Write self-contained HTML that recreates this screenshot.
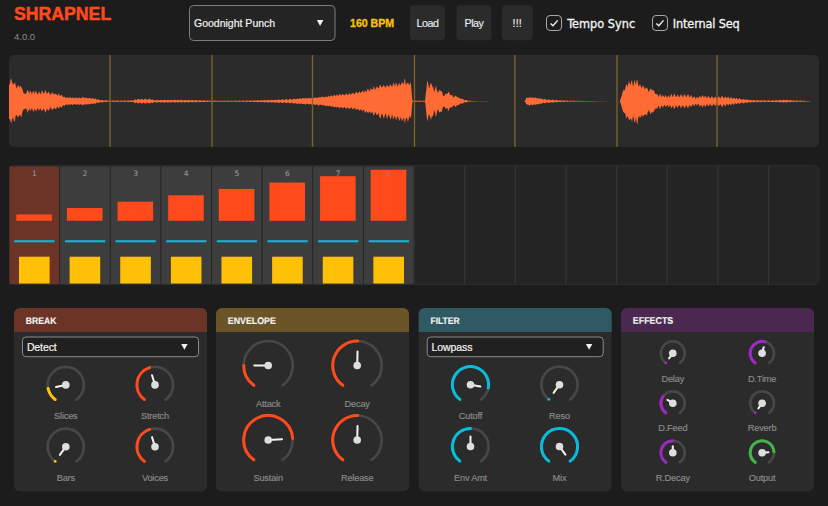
<!DOCTYPE html>
<html><head><meta charset="utf-8"><title>Shrapnel</title>
<style>
html,body{margin:0;padding:0;background:#1c1c1c;}
body{width:828px;height:506px;overflow:hidden;position:relative;font-family:"Liberation Sans",sans-serif;}
svg{position:absolute;left:0;top:0;display:block}
text{font-family:"Liberation Sans",sans-serif;}
.kl{font-size:9.2px;fill:#8c8c8c;stroke:#8c8c8c;stroke-width:0.15px;text-anchor:middle;letter-spacing:-0.17px}
.sn{font-family:"DejaVu Sans","Liberation Sans",sans-serif;font-size:7.5px;fill:#969696;stroke:#969696;stroke-width:0.1px;text-anchor:middle}
.pt{font-size:9.5px;font-weight:bold;fill:#f4f4f4;stroke:#f4f4f4;stroke-width:0.15px}
.st{fill:#f2f2f2;stroke:#f2f2f2;stroke-width:0.2px}
.bt{font-size:10.7px;fill:#ededed;stroke:#ededed;stroke-width:0.15px;text-anchor:middle;letter-spacing:-0.45px}
.cb{font-family:"DejaVu Sans","Liberation Sans",sans-serif;font-stretch:condensed;font-size:12.6px;fill:#f4f4f4;stroke:#f4f4f4;stroke-width:0.3px}
</style></head><body>
<svg width="828" height="506" viewBox="0 0 828 506">
<rect width="828" height="506" fill="#1c1c1c"/>
<!-- header -->
<text x="13.9" y="20" font-size="17.7" font-weight="bold" fill="#ff4a1c" stroke="#ff4a1c" stroke-width="0.45">SHRAPNEL</text>
<text x="14" y="40.2" font-size="9.5" fill="#8a8a8a">4.0.0</text>
<rect x="189.5" y="5.5" width="145.5" height="35" rx="4" fill="#242424" stroke="#7d7d7d"/>
<text x="194" y="26.6" class="st" font-size="10.5">Goodnight Punch</text>
<path d="M316.8 20 h6.6 l-3.3 6z" fill="#f0f0f0"/>
<text x="350" y="26.7" font-size="10.6" font-weight="bold" fill="#ffc107" stroke="#ffc107" stroke-width="0.3">160 BPM</text>
<rect x="410" y="5.3" width="35" height="35" rx="4" fill="#2b2b2b"/><text x="427.5" y="26.6" class="bt">Load</text>
<rect x="456.5" y="5.3" width="35" height="35" rx="4" fill="#2b2b2b"/><text x="474" y="26.6" class="bt">Play</text>
<rect x="502" y="5.3" width="30.7" height="35" rx="4" fill="#2b2b2b"/><text x="517.3" y="26.6" class="bt" style="letter-spacing:0.2px">!!!</text>
<rect x="546.5" y="15.5" width="15" height="15" rx="3.5" fill="#1c1c1c" stroke="#a8a8a8"/>
<path d="M550.6 23.5 l2.4 2.3 l4.7 -5.4" fill="none" stroke="#f4f4f4" stroke-width="1.4"/>
<text x="567.3" y="28" class="cb">Tempo Sync</text>
<rect x="652.5" y="15.5" width="15" height="15" rx="3.5" fill="#1c1c1c" stroke="#a8a8a8"/>
<path d="M656.4 23.5 l2.4 2.3 l4.7 -5.4" fill="none" stroke="#f4f4f4" stroke-width="1.4"/>
<text x="672.8" y="28" class="cb" style="letter-spacing:-0.15px">Internal Seq</text>
<!-- waveform -->
<rect x="9" y="55" width="810" height="92" rx="5" fill="#2b2b2b"/>
<path d="M9.00 83.59 L9.50 85.18 L10.00 83.61 L10.50 80.04 L11.00 78.64 L11.50 79.24 L12.00 82.08 L12.50 83.16 L13.00 84.90 L13.50 83.67 L14.00 83.86 L14.50 83.18 L15.00 82.03 L15.50 84.93 L16.00 86.58 L16.50 88.28 L17.00 87.69 L17.50 85.57 L18.00 86.01 L18.50 85.08 L19.00 86.36 L19.50 87.93 L20.00 86.01 L20.50 86.29 L21.00 86.40 L21.50 87.65 L22.00 87.80 L22.50 89.72 L23.00 91.37 L23.50 93.12 L24.00 93.51 L24.50 93.82 L25.00 93.37 L25.50 94.08 L26.00 93.98 L26.50 92.62 L27.00 91.12 L27.50 90.41 L28.00 90.07 L28.50 91.55 L29.00 93.29 L29.50 92.98 L30.00 91.68 L30.50 90.97 L31.00 91.17 L31.50 93.42 L32.00 94.40 L32.50 92.50 L33.00 90.87 L33.50 91.67 L34.00 91.60 L34.50 93.15 L35.00 93.54 L35.50 91.22 L36.00 90.60 L36.50 92.33 L37.00 93.22 L37.50 94.39 L38.00 94.07 L38.50 92.71 L39.00 91.33 L39.50 91.91 L40.00 93.50 L40.50 94.15 L41.00 93.32 L41.50 91.29 L42.00 90.54 L42.50 91.09 L43.00 93.27 L43.50 93.56 L44.00 93.10 L44.50 92.38 L45.00 90.41 L45.50 89.69 L46.00 91.24 L46.50 93.61 L47.00 93.22 L47.50 93.25 L48.00 92.18 L48.50 91.53 L49.00 92.56 L49.50 92.90 L50.00 94.18 L50.50 94.92 L51.00 94.01 L51.50 93.48 L52.00 92.72 L52.50 92.74 L53.00 92.82 L53.50 94.29 L54.00 94.47 L54.50 94.07 L55.00 93.99 L55.50 93.47 L56.00 93.97 L56.50 94.21 L57.00 95.24 L57.50 95.62 L58.00 95.00 L58.50 93.90 L59.00 93.27 L59.50 95.30 L60.00 96.11 L60.50 95.71 L61.00 94.95 L61.50 95.13 L62.00 94.81 L62.50 96.34 L63.00 96.90 L63.50 97.55 L64.00 96.49 L64.50 96.88 L65.00 96.83 L65.50 97.63 L66.00 98.18 L66.50 97.76 L67.00 97.31 L67.50 97.53 L68.00 97.51 L68.50 97.90 L69.00 97.91 L69.50 97.47 L70.00 97.30 L70.50 97.58 L71.00 97.89 L71.50 98.20 L72.00 98.08 L72.50 97.67 L73.00 97.25 L73.50 97.53 L74.00 98.23 L74.50 98.23 L75.00 98.21 L75.50 97.61 L76.00 97.42 L76.50 97.84 L77.00 98.00 L77.50 98.45 L78.00 98.24 L78.50 97.88 L79.00 97.50 L79.50 97.41 L80.00 97.73 L80.50 98.20 L81.00 98.14 L81.50 98.22 L82.00 97.48 L82.50 97.11 L83.00 97.01 L83.50 97.66 L84.00 97.59 L84.50 98.15 L85.00 98.27 L85.50 97.65 L86.00 97.50 L86.50 97.90 L87.00 97.63 L87.50 98.21 L88.00 98.29 L88.50 98.51 L89.00 98.19 L89.50 97.74 L90.00 98.13 L90.50 98.17 L91.00 98.81 L91.50 98.59 L92.00 98.38 L92.50 98.22 L93.00 98.29 L93.50 98.75 L94.00 98.77 L94.50 99.02 L95.00 98.66 L95.50 98.70 L96.00 98.47 L96.50 99.79 L97.00 99.80 L97.50 99.40 L98.00 99.34 L98.50 99.42 L99.00 99.58 L99.50 99.95 L100.00 100.27 L100.50 100.46 L101.00 100.26 L101.50 100.17 L102.00 100.06 L102.50 100.09 L103.00 100.22 L103.50 100.51 L104.00 100.70 L104.50 100.62 L105.00 100.47 L105.50 100.34 L106.00 100.31 L106.50 100.42 L107.00 100.51 L107.50 100.72 L108.00 100.79 L108.50 100.60 L109.00 100.48 L109.50 100.45 L110.00 100.45 L110.50 100.59 L111.00 100.64 L111.50 100.80 L112.00 100.76 L112.50 100.62 L113.00 100.59 L113.50 100.46 L114.00 100.48 L114.50 100.53 L115.00 100.71 L115.50 100.85 L116.00 100.69 L116.50 100.55 L117.00 100.46 L117.50 100.47 L118.00 100.55 L118.50 100.67 L119.00 100.81 L119.50 100.78 L120.00 100.68 L120.50 100.56 L121.00 100.44 L121.50 100.56 L122.00 100.64 L122.50 100.73 L123.00 100.82 L123.50 100.69 L124.00 100.55 L124.50 100.51 L125.00 100.48 L125.50 100.56 L126.00 100.72 L126.50 100.80 L127.00 100.63 L127.50 100.47 L128.00 100.45 L128.50 100.44 L129.00 100.57 L129.50 100.74 L130.00 100.68 L130.50 100.54 L131.00 100.41 L131.50 100.32 L132.00 100.37 L132.50 100.55 L133.00 100.74 L133.50 100.43 L134.00 100.09 L134.50 99.68 L135.00 99.29 L135.50 99.44 L136.00 99.66 L136.50 100.16 L137.00 99.64 L137.50 99.33 L138.00 99.12 L138.50 98.76 L139.00 99.28 L139.50 99.60 L140.00 100.07 L140.50 99.49 L141.00 99.00 L141.50 99.04 L142.00 98.98 L142.50 99.22 L143.00 99.44 L143.50 100.05 L144.00 99.46 L144.50 99.10 L145.00 98.69 L145.50 98.71 L146.00 98.79 L146.50 99.46 L147.00 99.96 L147.50 99.92 L148.00 99.31 L148.50 99.20 L149.00 98.83 L149.50 98.87 L150.00 99.10 L150.50 99.60 L151.00 100.11 L151.50 99.70 L152.00 99.26 L152.50 99.40 L153.00 99.51 L153.50 99.91 L154.00 100.25 L154.50 100.47 L155.00 100.59 L155.50 100.26 L156.00 100.16 L156.50 99.95 L157.00 99.89 L157.50 100.12 L158.00 100.26 L158.50 100.50 L159.00 100.38 L159.50 100.10 L160.00 99.95 L160.50 99.95 L161.00 99.89 L161.50 100.00 L162.00 100.29 L162.50 100.50 L163.00 100.23 L163.50 100.01 L164.00 99.79 L164.50 99.77 L165.00 99.84 L165.50 100.27 L166.00 100.52 L166.50 100.32 L167.00 99.94 L167.50 99.80 L168.00 99.91 L168.50 100.01 L169.00 100.12 L169.50 100.57 L170.00 100.29 L170.50 99.98 L171.00 99.91 L171.50 99.94 L172.00 99.90 L172.50 100.25 L173.00 100.61 L173.50 100.26 L174.00 99.97 L174.50 99.75 L175.00 99.82 L175.50 100.08 L176.00 100.29 L176.50 100.52 L177.00 100.12 L177.50 99.96 L178.00 99.84 L178.50 99.95 L179.00 100.09 L179.50 100.48 L180.00 100.49 L180.50 100.11 L181.00 100.05 L181.50 99.86 L182.00 99.98 L182.50 100.18 L183.00 100.51 L183.50 100.40 L184.00 100.14 L184.50 100.03 L185.00 100.01 L185.50 100.03 L186.00 100.30 L186.50 100.53 L187.00 100.46 L187.50 100.20 L188.00 100.06 L188.50 99.94 L189.00 100.08 L189.50 100.15 L190.00 100.41 L190.50 100.57 L191.00 100.29 L191.50 100.23 L192.00 100.10 L192.50 100.14 L193.00 100.11 L193.50 100.39 L194.00 100.62 L194.50 100.51 L195.00 100.26 L195.50 100.13 L196.00 100.19 L196.50 100.24 L197.00 100.28 L197.50 100.53 L198.00 100.70 L198.50 100.51 L199.00 100.31 L199.50 100.31 L200.00 100.22 L200.50 100.34 L201.00 100.39 L201.50 100.68 L202.00 100.74 L202.50 100.53 L203.00 100.47 L203.50 100.32 L204.00 100.34 L204.50 100.40 L205.00 100.65 L205.50 100.83 L206.00 100.68 L206.50 100.61 L207.00 100.46 L207.50 100.45 L208.00 100.56 L208.50 100.67 L209.00 100.82 L209.50 100.82 L210.00 100.66 L210.50 100.61 L211.00 100.53 L211.50 100.58 L212.00 100.67 L212.50 100.83 L213.00 100.88 L213.50 100.71 L214.00 100.59 L214.50 100.62 L215.00 100.60 L215.50 100.73 L216.00 100.87 L216.50 100.86 L217.00 100.74 L217.50 100.63 L218.00 100.63 L218.50 100.63 L219.00 100.73 L219.50 100.90 L220.00 100.81 L220.50 100.70 L221.00 100.65 L221.50 100.66 L222.00 100.67 L222.50 100.81 L223.00 100.91 L223.50 100.77 L224.00 100.72 L224.50 100.66 L225.00 100.66 L225.50 100.68 L226.00 100.84 L226.50 100.92 L227.00 100.76 L227.50 100.65 L228.00 100.61 L228.50 100.65 L229.00 100.67 L229.50 100.83 L230.00 100.92 L230.50 100.82 L231.00 100.66 L231.50 100.63 L232.00 100.65 L232.50 100.67 L233.00 100.79 L233.50 100.92 L234.00 100.83 L234.50 100.72 L235.00 100.69 L235.50 100.62 L236.00 100.68 L236.50 100.70 L237.00 100.85 L237.50 100.88 L238.00 100.76 L238.50 100.62 L239.00 100.62 L239.50 100.56 L240.00 100.64 L240.50 100.72 L241.00 100.88 L241.50 100.80 L242.00 100.72 L242.50 100.57 L243.00 100.61 L243.50 100.57 L244.00 100.68 L244.50 100.79 L245.00 100.91 L245.50 100.77 L246.00 100.62 L246.50 100.58 L247.00 100.49 L247.50 100.56 L248.00 100.62 L248.50 100.81 L249.00 100.78 L249.50 100.68 L250.00 100.58 L250.50 100.49 L251.00 100.49 L251.50 100.54 L252.00 100.67 L252.50 100.82 L253.00 100.58 L253.50 100.46 L254.00 100.40 L254.50 100.34 L255.00 100.42 L255.50 100.54 L256.00 100.75 L256.50 100.56 L257.00 100.38 L257.50 100.28 L258.00 100.23 L258.50 100.32 L259.00 100.56 L259.50 100.74 L260.00 100.48 L260.50 100.19 L261.00 100.12 L261.50 100.20 L262.00 100.30 L262.50 100.43 L263.00 100.62 L263.50 100.37 L264.00 100.16 L264.50 100.00 L265.00 99.99 L265.50 100.21 L266.00 100.43 L266.50 100.43 L267.00 100.20 L267.50 99.90 L268.00 99.81 L268.50 100.00 L269.00 100.24 L269.50 100.48 L270.00 100.30 L270.50 100.07 L271.00 99.91 L271.50 99.90 L272.00 99.85 L272.50 100.10 L273.00 100.46 L273.50 100.33 L274.00 99.99 L274.50 99.77 L275.00 99.63 L275.50 99.64 L276.00 99.99 L276.50 100.29 L277.00 100.23 L277.50 99.97 L278.00 99.54 L278.50 99.43 L279.00 99.49 L279.50 99.76 L280.00 100.07 L280.50 100.34 L281.00 99.94 L281.50 99.55 L282.00 99.54 L282.50 99.34 L283.00 99.34 L283.50 99.74 L284.00 100.12 L284.50 100.23 L285.00 99.69 L285.50 99.28 L286.00 99.19 L286.50 99.06 L287.00 99.22 L287.50 99.79 L288.00 100.05 L288.50 99.89 L289.00 99.53 L289.50 99.05 L290.00 98.80 L290.50 99.11 L291.00 99.11 L291.50 99.74 L292.00 100.12 L292.50 99.46 L293.00 98.99 L293.50 98.73 L294.00 98.81 L294.50 98.99 L295.00 99.32 L295.50 99.25 L296.00 98.99 L296.50 99.00 L297.00 98.71 L297.50 98.45 L298.00 98.91 L298.50 99.03 L299.00 98.91 L299.50 98.25 L300.00 98.29 L300.50 98.51 L301.00 98.70 L301.50 98.82 L302.00 98.39 L302.50 98.17 L303.00 98.02 L303.50 98.27 L304.00 98.52 L304.50 98.38 L305.00 98.12 L305.50 97.75 L306.00 98.21 L306.50 98.51 L307.00 98.40 L307.50 98.36 L308.00 98.27 L308.50 97.64 L309.00 98.20 L309.50 98.05 L310.00 98.29 L310.50 98.58 L311.00 98.18 L311.50 97.89 L312.00 97.51 L312.50 98.05 L313.00 98.07 L313.50 98.08 L314.00 98.02 L314.50 97.71 L315.00 97.80 L315.50 97.64 L316.00 97.32 L316.50 97.84 L317.00 97.93 L317.50 97.88 L318.00 97.73 L318.50 97.38 L319.00 96.73 L319.50 97.45 L320.00 97.32 L320.50 97.73 L321.00 97.35 L321.50 97.00 L322.00 96.57 L322.50 96.58 L323.00 97.22 L323.50 97.18 L324.00 97.17 L324.50 97.18 L325.00 96.65 L325.50 96.28 L326.00 96.97 L326.50 97.35 L327.00 96.90 L327.50 97.00 L328.00 95.97 L328.50 95.68 L329.00 96.32 L329.50 96.94 L330.00 96.54 L330.50 95.77 L331.00 95.68 L331.50 95.27 L332.00 96.38 L332.50 96.15 L333.00 96.44 L333.50 95.04 L334.00 95.25 L334.50 95.08 L335.00 95.76 L335.50 96.02 L336.00 95.18 L336.50 95.29 L337.00 94.26 L337.50 94.87 L338.00 96.22 L338.50 95.74 L339.00 94.42 L339.50 93.77 L340.00 94.22 L340.50 94.88 L341.00 95.66 L341.50 95.40 L342.00 94.17 L342.50 93.85 L343.00 94.55 L343.50 94.63 L344.00 95.03 L344.50 95.44 L345.00 95.00 L345.50 94.44 L346.00 93.79 L346.50 93.59 L347.00 94.01 L347.50 95.26 L348.00 95.04 L348.50 94.23 L349.00 93.79 L349.50 93.53 L350.00 93.12 L350.50 94.48 L351.00 94.58 L351.50 94.07 L352.00 93.52 L352.50 93.81 L353.00 92.17 L353.50 93.02 L354.00 93.65 L354.50 94.58 L355.00 93.87 L355.50 92.82 L356.00 92.21 L356.50 91.60 L357.00 92.48 L357.50 93.18 L358.00 93.15 L358.50 92.90 L359.00 91.72 L359.50 91.01 L360.00 92.70 L360.50 92.41 L361.00 92.91 L361.50 91.74 L362.00 91.69 L362.50 90.65 L363.00 90.99 L363.50 92.14 L364.00 92.85 L364.50 91.11 L365.00 90.18 L365.50 90.88 L366.00 91.92 L366.50 91.70 L367.00 91.07 L367.50 88.93 L368.00 88.65 L368.50 89.41 L369.00 90.79 L369.50 91.31 L370.00 90.73 L370.50 87.56 L371.00 89.28 L371.50 88.65 L372.00 90.59 L372.50 89.22 L373.00 88.99 L373.50 86.49 L374.00 86.75 L374.50 88.13 L375.00 90.39 L375.50 88.67 L376.00 88.24 L376.50 87.00 L377.00 86.95 L377.50 86.25 L378.00 88.26 L378.50 88.53 L379.00 88.02 L379.50 85.68 L380.00 85.11 L380.50 84.97 L381.00 86.07 L381.50 87.53 L382.00 86.94 L382.50 87.10 L383.00 86.20 L383.50 84.29 L384.00 86.16 L384.50 86.24 L385.00 86.23 L385.50 88.22 L386.00 86.61 L386.50 85.55 L387.00 85.69 L387.50 85.25 L388.00 85.46 L388.50 86.86 L389.00 87.44 L389.50 85.43 L390.00 84.19 L390.50 84.71 L391.00 85.47 L391.50 86.05 L392.00 86.84 L392.50 86.30 L393.00 83.44 L393.50 82.26 L394.00 84.15 L394.50 84.43 L395.00 87.43 L395.50 84.03 L396.00 81.79 L396.50 83.94 L397.00 84.29 L397.50 86.83 L398.00 86.06 L398.50 84.51 L399.00 82.74 L399.50 82.94 L400.00 85.12 L400.50 84.66 L401.00 85.30 L401.50 82.67 L402.00 82.22 L402.50 82.36 L403.00 83.51 L403.50 83.93 L404.00 83.10 L404.50 78.96 L405.00 78.50 L405.50 83.23 L406.00 85.63 L406.50 83.41 L407.00 83.50 L407.50 83.56 L408.00 81.67 L408.50 84.03 L409.00 84.47 L409.50 84.69 L410.00 83.67 L410.50 81.85 L411.00 84.84 L411.50 90.23 L412.00 97.17 L412.50 100.60 L413.00 100.75 L413.50 100.87 L414.00 100.87 L414.50 100.74 L415.00 100.64 L415.50 100.64 L416.00 100.59 L416.50 100.72 L417.00 100.79 L417.50 100.91 L418.00 100.84 L418.50 100.73 L419.00 100.67 L419.50 100.62 L420.00 100.67 L420.50 100.76 L421.00 100.85 L421.50 100.96 L422.00 100.83 L422.50 100.71 L423.00 100.71 L423.50 100.67 L424.00 100.77 L424.50 100.82 L425.00 100.88 L425.50 96.90 L426.00 91.79 L426.50 89.09 L427.00 82.28 L427.50 80.48 L428.00 83.76 L428.50 84.53 L429.00 88.35 L429.50 87.76 L430.00 85.81 L430.50 83.43 L431.00 82.52 L431.50 84.15 L432.00 85.13 L432.50 87.22 L433.00 86.69 L433.50 88.48 L434.00 91.23 L434.50 91.86 L435.00 88.91 L435.50 87.64 L436.00 85.01 L436.50 88.52 L437.00 90.55 L437.50 92.06 L438.00 92.95 L438.50 91.34 L439.00 90.24 L439.50 89.78 L440.00 91.74 L440.50 89.92 L441.00 91.33 L441.50 91.11 L442.00 91.98 L442.50 93.22 L443.00 95.48 L443.50 95.95 L444.00 96.42 L444.50 95.67 L445.00 94.67 L445.50 93.58 L446.00 93.67 L446.50 93.90 L447.00 94.27 L447.50 93.33 L448.00 92.95 L448.50 91.74 L449.00 91.75 L449.50 93.18 L450.00 94.76 L450.50 95.36 L451.00 95.17 L451.50 95.55 L452.00 94.75 L452.50 95.32 L453.00 96.74 L453.50 97.38 L454.00 97.26 L454.50 96.66 L455.00 95.49 L455.50 95.70 L456.00 95.67 L456.50 96.54 L457.00 96.95 L457.50 97.33 L458.00 97.52 L458.50 97.27 L459.00 97.82 L459.50 98.34 L460.00 98.46 L460.50 98.63 L461.00 98.80 L461.50 98.43 L462.00 98.73 L462.50 99.00 L463.00 99.06 L463.50 99.54 L464.00 99.94 L464.50 100.34 L465.00 100.24 L465.50 99.96 L466.00 99.94 L466.50 100.01 L467.00 100.31 L467.50 100.47 L468.00 100.75 L468.50 100.89 L469.00 100.81 L469.50 100.79 L470.00 100.77 L470.50 100.78 L471.00 100.86 L471.50 100.97 L472.00 101.03 L472.50 101.02 L473.00 100.98 L473.50 100.99 L474.00 101.00 L474.50 101.03 L475.00 101.09 L475.50 101.12 L476.00 101.11 L476.50 101.08 L477.00 101.05 L477.50 101.07 L478.00 101.07 L478.50 101.10 L479.00 101.13 L479.50 101.12 L480.00 101.10 L480.50 101.07 L481.00 101.08 L481.50 101.10 L482.00 101.12 L482.50 101.15 L483.00 101.12 L483.50 101.11 L484.00 101.10 L484.50 101.09 L485.00 101.11 L485.50 101.14 L486.00 101.15 L486.50 101.13 L487.00 101.11 L487.50 101.12 L488.00 101.11 L488.50 101.13 L489.00 101.15 L489.50 101.16 L490.00 101.14 L490.50 101.13 L491.00 101.13 L491.50 101.13 L492.00 101.15 L492.50 101.16 L493.00 101.17 L493.50 101.15 L494.00 101.15 L494.50 101.15 L495.00 101.15 L495.50 101.16 L496.00 101.17 L496.50 101.18 L497.00 101.17 L497.50 101.17 L498.00 101.16 L498.50 101.17 L499.00 101.17 L499.50 101.18 L500.00 101.19 L500.50 101.18 L501.00 101.18 L501.50 101.18 L502.00 101.18 L502.50 101.19 L503.00 101.19 L503.50 101.19 L504.00 101.20 L504.50 101.20 L505.00 101.20 L505.50 101.20 L506.00 101.20 L506.50 101.20 L507.00 101.20 L507.50 101.20 L508.00 101.20 L508.50 101.20 L509.00 101.20 L509.50 101.20 L510.00 101.20 L510.50 101.20 L511.00 101.20 L511.50 101.20 L512.00 101.20 L512.50 101.20 L513.00 101.20 L513.50 101.20 L514.00 101.20 L514.50 101.20 L515.00 101.20 L515.50 101.20 L516.00 101.20 L516.50 101.20 L517.00 101.20 L517.50 101.20 L518.00 101.20 L518.50 101.20 L519.00 101.20 L519.50 101.20 L520.00 101.20 L520.50 101.20 L521.00 101.20 L521.50 101.20 L522.00 101.20 L522.50 101.20 L523.00 101.20 L523.50 101.20 L524.00 101.20 L524.50 100.96 L525.00 100.77 L525.50 100.26 L526.00 98.40 L526.50 97.87 L527.00 97.67 L527.50 97.82 L528.00 97.86 L528.50 97.89 L529.00 97.55 L529.50 97.32 L530.00 97.36 L530.50 97.69 L531.00 97.83 L531.50 97.71 L532.00 97.44 L532.50 97.17 L533.00 97.40 L533.50 98.05 L534.00 98.01 L534.50 97.74 L535.00 97.72 L535.50 97.60 L536.00 97.85 L536.50 98.21 L537.00 98.40 L537.50 98.33 L538.00 98.13 L538.50 98.38 L539.00 98.46 L539.50 98.57 L540.00 98.72 L540.50 98.70 L541.00 98.40 L541.50 98.56 L542.00 98.96 L542.50 99.08 L543.00 99.74 L543.50 99.82 L544.00 99.22 L544.50 99.04 L545.00 99.03 L545.50 99.29 L546.00 99.43 L546.50 99.95 L547.00 100.30 L547.50 99.87 L548.00 99.75 L548.50 99.45 L549.00 99.53 L549.50 99.64 L550.00 99.91 L550.50 100.12 L551.00 100.38 L551.50 100.01 L552.00 99.87 L552.50 99.70 L553.00 99.79 L553.50 99.90 L554.00 100.14 L554.50 100.42 L555.00 100.48 L555.50 100.23 L556.00 100.06 L556.50 99.97 L557.00 100.10 L557.50 100.28 L558.00 100.46 L558.50 100.72 L559.00 100.45 L559.50 100.36 L560.00 100.31 L560.50 100.25 L561.00 100.45 L561.50 100.61 L562.00 100.78 L562.50 100.62 L563.00 100.52 L563.50 100.43 L564.00 100.39 L564.50 100.54 L565.00 100.67 L565.50 100.85 L566.00 100.77 L566.50 100.60 L567.00 100.60 L567.50 100.59 L568.00 100.66 L568.50 100.77 L569.00 100.94 L569.50 100.78 L570.00 100.69 L570.50 100.62 L571.00 100.65 L571.50 100.78 L572.00 100.87 L572.50 100.93 L573.00 100.81 L573.50 100.71 L574.00 100.71 L574.50 100.73 L575.00 100.81 L575.50 100.94 L576.00 100.93 L576.50 100.83 L577.00 100.82 L577.50 100.79 L578.00 100.85 L578.50 100.89 L579.00 100.99 L579.50 100.97 L580.00 100.91 L580.50 100.86 L581.00 100.87 L581.50 100.91 L582.00 100.94 L582.50 101.02 L583.00 101.03 L583.50 100.96 L584.00 100.91 L584.50 100.90 L585.00 100.93 L585.50 100.96 L586.00 101.02 L586.50 101.06 L587.00 101.00 L587.50 100.97 L588.00 100.95 L588.50 100.95 L589.00 100.98 L589.50 101.03 L590.00 101.09 L590.50 101.08 L591.00 101.03 L591.50 101.00 L592.00 101.01 L592.50 101.02 L593.00 101.05 L593.50 101.09 L594.00 101.12 L594.50 101.09 L595.00 101.08 L595.50 101.04 L596.00 101.05 L596.50 101.06 L597.00 101.08 L597.50 101.12 L598.00 101.13 L598.50 101.11 L599.00 101.08 L599.50 101.07 L600.00 101.09 L600.50 101.09 L601.00 101.12 L601.50 101.14 L602.00 101.13 L602.50 101.11 L603.00 101.10 L603.50 101.10 L604.00 101.11 L604.50 101.12 L605.00 101.15 L605.50 101.15 L606.00 101.14 L606.50 101.12 L607.00 101.11 L607.50 101.13 L608.00 101.14 L608.50 101.16 L609.00 101.16 L609.50 101.15 L610.00 101.15 L610.50 101.14 L611.00 101.14 L611.50 101.15 L612.00 101.17 L612.50 101.17 L613.00 101.15 L613.50 101.15 L614.00 101.15 L614.50 101.15 L615.00 101.16 L615.50 101.17 L616.00 101.16 L616.50 101.15 L617.00 101.15 L617.50 101.15 L618.00 101.15 L618.50 101.16 L619.00 101.17 L619.50 101.16 L620.00 100.80 L620.50 99.30 L621.00 97.96 L621.50 96.11 L622.00 94.89 L622.50 91.78 L623.00 91.80 L623.50 89.60 L624.00 90.24 L624.50 90.13 L625.00 89.74 L625.50 86.88 L626.00 85.33 L626.50 84.13 L627.00 84.78 L627.50 87.35 L628.00 84.11 L628.50 83.64 L629.00 79.89 L629.50 83.00 L630.00 83.43 L630.50 85.58 L631.00 82.55 L631.50 80.69 L632.00 80.46 L632.50 83.65 L633.00 86.15 L633.50 85.70 L634.00 82.04 L634.50 79.47 L635.00 81.82 L635.50 84.16 L636.00 83.99 L636.50 81.22 L637.00 79.84 L637.50 80.33 L638.00 83.63 L638.50 86.28 L639.00 86.15 L639.50 85.57 L640.00 83.85 L640.50 85.06 L641.00 87.37 L641.50 87.26 L642.00 88.21 L642.50 86.28 L643.00 85.08 L643.50 86.51 L644.00 86.97 L644.50 88.64 L645.00 89.12 L645.50 88.49 L646.00 86.96 L646.50 88.24 L647.00 87.94 L647.50 88.76 L648.00 90.02 L648.50 92.20 L649.00 91.55 L649.50 90.58 L650.00 89.29 L650.50 88.94 L651.00 88.30 L651.50 90.60 L652.00 89.33 L652.50 90.06 L653.00 90.40 L653.50 90.39 L654.00 90.86 L654.50 91.82 L655.00 93.69 L655.50 94.11 L656.00 94.07 L656.50 94.25 L657.00 93.70 L657.50 94.66 L658.00 95.24 L658.50 96.62 L659.00 96.72 L659.50 95.11 L660.00 94.15 L660.50 94.08 L661.00 95.66 L661.50 96.88 L662.00 96.69 L662.50 95.53 L663.00 94.95 L663.50 95.92 L664.00 96.77 L664.50 97.34 L665.00 96.58 L665.50 94.84 L666.00 95.53 L666.50 96.77 L667.00 97.75 L667.50 97.45 L668.00 95.88 L668.50 95.43 L669.00 95.41 L669.50 97.20 L670.00 97.17 L670.50 96.07 L671.00 94.42 L671.50 93.90 L672.00 94.95 L672.50 96.78 L673.00 96.84 L673.50 95.88 L674.00 93.58 L674.50 93.53 L675.00 95.09 L675.50 96.08 L676.00 97.17 L676.50 96.39 L677.00 95.60 L677.50 95.04 L678.00 94.68 L678.50 95.96 L679.00 97.26 L679.50 97.05 L680.00 96.29 L680.50 94.95 L681.00 93.93 L681.50 94.67 L682.00 95.97 L682.50 96.70 L683.00 97.19 L683.50 95.91 L684.00 94.55 L684.50 94.15 L685.00 95.17 L685.50 95.82 L686.00 97.13 L686.50 96.98 L687.00 95.67 L687.50 94.80 L688.00 94.45 L688.50 94.57 L689.00 96.55 L689.50 97.41 L690.00 97.11 L690.50 95.68 L691.00 95.16 L691.50 95.75 L692.00 96.87 L692.50 98.01 L693.00 97.86 L693.50 97.14 L694.00 96.51 L694.50 96.50 L695.00 97.69 L695.50 98.66 L696.00 98.50 L696.50 97.65 L697.00 96.63 L697.50 97.32 L698.00 98.06 L698.50 98.31 L699.00 97.14 L699.50 96.54 L700.00 95.70 L700.50 96.62 L701.00 97.88 L701.50 97.29 L702.00 95.98 L702.50 94.99 L703.00 95.66 L703.50 96.99 L704.00 97.86 L704.50 96.91 L705.00 95.60 L705.50 95.93 L706.00 96.77 L706.50 97.52 L707.00 98.22 L707.50 97.71 L708.00 96.38 L708.50 95.87 L709.00 96.58 L709.50 97.75 L710.00 98.27 L710.50 98.28 L711.00 97.51 L711.50 96.45 L712.00 96.17 L712.50 96.80 L713.00 98.10 L713.50 98.53 L714.00 98.03 L714.50 97.26 L715.00 96.74 L715.50 96.96 L716.00 97.63 L716.50 98.47 L717.00 98.84 L717.50 98.28 L718.00 97.43 L718.50 96.38 L719.00 96.52 L719.50 97.35 L720.00 98.25 L720.50 98.37 L721.00 97.38 L721.50 96.21 L722.00 95.80 L722.50 96.54 L723.00 96.95 L723.50 98.21 L724.00 97.87 L724.50 97.39 L725.00 96.81 L725.50 96.55 L726.00 97.60 L726.50 98.23 L727.00 98.19 L727.50 97.30 L728.00 96.73 L728.50 96.69 L729.00 97.90 L729.50 98.91 L730.00 98.34 L730.50 97.45 L731.00 96.96 L731.50 97.84 L732.00 98.52 L732.50 98.85 L733.00 98.23 L733.50 97.91 L734.00 97.83 L734.50 98.32 L735.00 99.12 L735.50 98.92 L736.00 98.42 L736.50 97.98 L737.00 98.11 L737.50 98.94 L738.00 99.54 L738.50 99.31 L739.00 98.50 L739.50 98.16 L740.00 98.51 L740.50 99.22 L741.00 99.58 L741.50 99.56 L742.00 99.94 L742.50 99.50 L743.00 99.23 L743.50 98.84 L744.00 99.13 L744.50 99.42 L745.00 99.91 L745.50 100.08 L746.00 99.71 L746.50 99.40 L747.00 99.35 L747.50 99.52 L748.00 99.84 L748.50 100.32 L749.00 100.32 L749.50 100.15 L750.00 99.87 L750.50 99.98 L751.00 99.97 L751.50 100.21 L752.00 100.51 L752.50 100.41 L753.00 100.16 L753.50 100.09 L754.00 100.05 L754.50 100.20 L755.00 100.43 L755.50 100.65 L756.00 100.49 L756.50 100.28 L757.00 100.17 L757.50 100.27 L758.00 100.31 L758.50 100.44 L759.00 100.69 L759.50 100.59 L760.00 100.49 L760.50 100.39 L761.00 100.32 L761.50 100.37 L762.00 100.46 L762.50 100.62 L763.00 100.75 L763.50 100.55 L764.00 100.37 L764.50 100.37 L765.00 100.38 L765.50 100.44 L766.00 100.61 L766.50 100.78 L767.00 100.65 L767.50 100.49 L768.00 100.40 L768.50 100.37 L769.00 100.37 L769.50 100.56 L770.00 100.67 L770.50 100.82 L771.00 100.59 L771.50 100.45 L772.00 100.39 L772.50 100.37 L773.00 100.34 L773.50 100.52 L774.00 100.63 L774.50 100.64 L775.00 100.50 L775.50 100.29 L776.00 100.19 L776.50 100.24 L777.00 100.30 L777.50 100.51 L778.00 100.72 L778.50 100.48 L779.00 100.25 L779.50 100.10 L780.00 100.03 L780.50 100.06 L781.00 100.33 L781.50 100.53 L782.00 100.45 L782.50 100.13 L783.00 99.83 L783.50 99.86 L784.00 99.83 L784.50 100.05 L785.00 100.41 L785.50 100.27 L786.00 100.06 L786.50 99.82 L787.00 99.93 L787.50 100.08 L788.00 100.23 L788.50 100.56 L789.00 100.45 L789.50 100.21 L790.00 100.17 L790.50 100.06 L791.00 100.29 L791.50 100.57 L792.00 100.77 L792.50 100.58 L793.00 100.47 L793.50 100.43 L794.00 100.42 L794.50 100.57 L795.00 100.74 L795.50 100.79 L796.00 100.61 L796.50 100.50 L797.00 100.53 L797.50 100.50 L798.00 100.67 L798.50 100.78 L799.00 100.85 L799.50 100.76 L800.00 100.66 L800.50 100.59 L801.00 100.61 L801.50 100.73 L802.00 100.86 L802.50 100.94 L803.00 100.83 L803.50 100.73 L804.00 100.77 L804.50 100.80 L805.00 100.82 L805.50 100.93 L806.00 101.02 L806.50 100.96 L807.00 100.92 L807.50 100.91 L808.00 100.87 L808.50 100.95 L809.00 101.02 L809.50 101.09 L810.00 101.11 L810.50 101.12 L811.00 101.13 L811.50 101.16 L812.00 101.20 L812.50 101.20 L813.00 101.20 L813.50 101.20 L814.00 101.20 L814.50 101.20 L815.00 101.20 L815.50 101.20 L816.00 101.20 L816.50 101.20 L817.00 101.20 L817.50 101.20 L818.00 101.20 L818.50 101.20 L819.00 101.20 L819.00 101.20 L818.50 101.20 L818.00 101.20 L817.50 101.20 L817.00 101.20 L816.50 101.20 L816.00 101.20 L815.50 101.20 L815.00 101.20 L814.50 101.20 L814.00 101.20 L813.50 101.20 L813.00 101.20 L812.50 101.20 L812.00 101.20 L811.50 101.24 L811.00 101.27 L810.50 101.29 L810.00 101.28 L809.50 101.30 L809.00 101.38 L808.50 101.45 L808.00 101.51 L807.50 101.51 L807.00 101.51 L806.50 101.45 L806.00 101.38 L805.50 101.48 L805.00 101.59 L804.50 101.65 L804.00 101.63 L803.50 101.65 L803.00 101.58 L802.50 101.47 L802.00 101.54 L801.50 101.67 L801.00 101.71 L800.50 101.79 L800.00 101.80 L799.50 101.66 L799.00 101.55 L798.50 101.58 L798.00 101.75 L797.50 101.84 L797.00 101.89 L796.50 101.90 L796.00 101.72 L795.50 101.60 L795.00 101.66 L794.50 101.85 L794.00 102.02 L793.50 101.96 L793.00 101.89 L792.50 101.81 L792.00 101.60 L791.50 101.88 L791.00 102.11 L790.50 102.24 L790.00 102.25 L789.50 102.20 L789.00 102.00 L788.50 101.87 L788.00 102.12 L787.50 102.37 L787.00 102.63 L786.50 102.54 L786.00 102.43 L785.50 102.09 L785.00 102.05 L784.50 102.36 L784.00 102.64 L783.50 102.58 L783.00 102.53 L782.50 102.23 L782.00 102.05 L781.50 101.88 L781.00 102.13 L780.50 102.32 L780.00 102.30 L779.50 102.36 L779.00 102.16 L778.50 101.95 L778.00 101.70 L777.50 101.96 L777.00 102.05 L776.50 102.20 L776.00 102.11 L775.50 102.16 L775.00 101.93 L774.50 101.74 L774.00 101.76 L773.50 101.96 L773.00 102.00 L772.50 102.15 L772.00 102.00 L771.50 101.93 L771.00 101.75 L770.50 101.61 L770.00 101.73 L769.50 101.88 L769.00 102.04 L768.50 102.03 L768.00 101.96 L767.50 101.84 L767.00 101.72 L766.50 101.62 L766.00 101.83 L765.50 101.95 L765.00 102.07 L764.50 102.08 L764.00 101.98 L763.50 101.81 L763.00 101.67 L762.50 101.71 L762.00 101.86 L761.50 102.04 L761.00 102.13 L760.50 102.14 L760.00 101.92 L759.50 101.82 L759.00 101.72 L758.50 101.91 L758.00 102.05 L757.50 102.29 L757.00 102.27 L756.50 102.12 L756.00 101.85 L755.50 101.76 L755.00 101.99 L754.50 102.15 L754.00 102.34 L753.50 102.32 L753.00 102.30 L752.50 101.97 L752.00 101.84 L751.50 102.22 L751.00 102.45 L750.50 102.45 L750.00 102.37 L749.50 102.36 L749.00 102.06 L748.50 102.13 L748.00 102.43 L747.50 102.75 L747.00 102.97 L746.50 102.90 L746.00 102.56 L745.50 102.16 L745.00 102.56 L744.50 103.06 L744.00 103.50 L743.50 103.36 L743.00 103.50 L742.50 102.86 L742.00 102.34 L741.50 103.01 L741.00 102.81 L740.50 102.99 L740.00 103.51 L739.50 103.80 L739.00 104.00 L738.50 103.04 L738.00 103.07 L737.50 103.29 L737.00 103.93 L736.50 104.23 L736.00 104.05 L735.50 103.29 L735.00 103.12 L734.50 104.06 L734.00 104.52 L733.50 104.88 L733.00 103.82 L732.50 103.42 L732.00 103.54 L731.50 104.64 L731.00 105.45 L730.50 104.84 L730.00 104.05 L729.50 103.65 L729.00 104.19 L728.50 105.37 L728.00 105.29 L727.50 104.75 L727.00 103.91 L726.50 103.86 L726.00 105.05 L725.50 106.10 L725.00 106.04 L724.50 105.39 L724.00 104.59 L723.50 104.08 L723.00 105.43 L722.50 106.41 L722.00 106.94 L721.50 105.87 L721.00 104.97 L720.50 104.37 L720.00 104.60 L719.50 105.35 L719.00 105.72 L718.50 106.08 L718.00 104.66 L717.50 104.21 L717.00 103.46 L716.50 104.17 L716.00 104.73 L715.50 105.82 L715.00 105.88 L714.50 105.06 L714.00 104.34 L713.50 104.08 L713.00 104.68 L712.50 105.61 L712.00 106.40 L711.50 105.85 L711.00 105.56 L710.50 104.34 L710.00 104.32 L709.50 104.86 L709.00 105.70 L708.50 106.07 L708.00 105.78 L707.50 104.90 L707.00 104.31 L706.50 104.61 L706.00 106.25 L705.50 106.73 L705.00 106.49 L704.50 105.62 L704.00 104.49 L703.50 105.77 L703.00 106.48 L702.50 107.91 L702.00 106.15 L701.50 105.24 L701.00 104.81 L700.50 105.72 L700.00 106.87 L699.50 106.43 L699.00 105.01 L698.50 103.85 L698.00 104.10 L697.50 104.76 L697.00 105.71 L696.50 105.00 L696.00 104.23 L695.50 103.83 L695.00 104.71 L694.50 105.96 L694.00 106.11 L693.50 105.27 L693.00 104.09 L692.50 104.49 L692.00 105.53 L691.50 106.75 L691.00 106.51 L690.50 106.51 L690.00 105.40 L689.50 105.18 L689.00 106.06 L688.50 107.30 L688.00 108.32 L687.50 107.50 L687.00 106.80 L686.50 105.42 L686.00 105.35 L685.50 106.37 L685.00 108.34 L684.50 107.67 L684.00 107.51 L683.50 106.30 L683.00 105.50 L682.50 105.65 L682.00 105.91 L681.50 108.01 L681.00 107.87 L680.50 107.48 L680.00 106.01 L679.50 105.23 L679.00 105.49 L678.50 105.83 L678.00 107.49 L677.50 107.69 L677.00 107.31 L676.50 106.26 L676.00 105.45 L675.50 105.78 L675.00 108.13 L674.50 108.33 L674.00 109.04 L673.50 107.45 L673.00 105.45 L672.50 105.93 L672.00 107.68 L671.50 108.01 L671.00 107.58 L670.50 105.76 L670.00 105.28 L669.50 105.41 L669.00 106.76 L668.50 107.41 L668.00 105.80 L667.50 104.77 L667.00 104.94 L666.50 106.15 L666.00 106.62 L665.50 107.33 L665.00 105.69 L664.50 104.78 L664.00 105.21 L663.50 106.54 L663.00 107.84 L662.50 107.18 L662.00 105.95 L661.50 105.47 L661.00 106.28 L660.50 108.17 L660.00 109.14 L659.50 107.99 L659.00 106.06 L658.50 105.93 L658.00 106.45 L657.50 108.12 L657.00 109.56 L656.50 107.94 L656.00 107.77 L655.50 108.64 L655.00 109.34 L654.50 110.02 L654.00 110.96 L653.50 111.88 L653.00 112.52 L652.50 112.59 L652.00 111.61 L651.50 112.55 L651.00 113.99 L650.50 113.83 L650.00 112.87 L649.50 111.44 L649.00 109.99 L648.50 110.59 L648.00 112.16 L647.50 112.43 L647.00 115.30 L646.50 115.44 L646.00 114.79 L645.50 114.08 L645.00 114.91 L644.50 114.68 L644.00 115.10 L643.50 116.09 L643.00 116.95 L642.50 116.34 L642.00 114.68 L641.50 114.80 L641.00 117.01 L640.50 116.83 L640.00 118.26 L639.50 117.09 L639.00 115.29 L638.50 117.17 L638.00 118.72 L637.50 124.58 L637.00 123.41 L636.50 121.29 L636.00 116.70 L635.50 119.82 L635.00 122.17 L634.50 122.49 L634.00 120.35 L633.50 116.57 L633.00 116.61 L632.50 118.55 L632.00 122.48 L631.50 120.01 L631.00 119.26 L630.50 118.35 L630.00 119.35 L629.50 119.73 L629.00 120.33 L628.50 118.45 L628.00 117.04 L627.50 116.52 L627.00 115.73 L626.50 118.53 L626.00 118.21 L625.50 114.64 L625.00 113.33 L624.50 113.18 L624.00 112.59 L623.50 112.14 L623.00 111.43 L622.50 109.69 L622.00 107.84 L621.50 106.33 L621.00 104.53 L620.50 103.06 L620.00 101.63 L619.50 101.23 L619.00 101.22 L618.50 101.24 L618.00 101.25 L617.50 101.25 L617.00 101.25 L616.50 101.25 L616.00 101.23 L615.50 101.23 L615.00 101.24 L614.50 101.25 L614.00 101.26 L613.50 101.26 L613.00 101.25 L612.50 101.23 L612.00 101.24 L611.50 101.25 L611.00 101.26 L610.50 101.26 L610.00 101.26 L609.50 101.25 L609.00 101.24 L608.50 101.24 L608.00 101.26 L607.50 101.27 L607.00 101.28 L606.50 101.28 L606.00 101.26 L605.50 101.25 L605.00 101.25 L604.50 101.28 L604.00 101.29 L603.50 101.30 L603.00 101.31 L602.50 101.28 L602.00 101.27 L601.50 101.26 L601.00 101.28 L600.50 101.31 L600.00 101.32 L599.50 101.33 L599.00 101.31 L598.50 101.30 L598.00 101.27 L597.50 101.29 L597.00 101.32 L596.50 101.34 L596.00 101.35 L595.50 101.36 L595.00 101.32 L594.50 101.30 L594.00 101.28 L593.50 101.32 L593.00 101.36 L592.50 101.38 L592.00 101.40 L591.50 101.38 L591.00 101.37 L590.50 101.32 L590.00 101.31 L589.50 101.37 L589.00 101.40 L588.50 101.45 L588.00 101.46 L587.50 101.43 L587.00 101.39 L586.50 101.33 L586.00 101.36 L585.50 101.45 L585.00 101.49 L584.50 101.49 L584.00 101.47 L583.50 101.44 L583.00 101.39 L582.50 101.39 L582.00 101.47 L581.50 101.51 L581.00 101.56 L580.50 101.55 L580.00 101.50 L579.50 101.40 L579.00 101.39 L578.50 101.49 L578.00 101.59 L577.50 101.59 L577.00 101.62 L576.50 101.56 L576.00 101.45 L575.50 101.47 L575.00 101.60 L574.50 101.67 L574.00 101.70 L573.50 101.63 L573.00 101.61 L572.50 101.48 L572.00 101.55 L571.50 101.67 L571.00 101.76 L570.50 101.78 L570.00 101.69 L569.50 101.58 L569.00 101.49 L568.50 101.62 L568.00 101.70 L567.50 101.78 L567.00 101.86 L566.50 101.74 L566.00 101.63 L565.50 101.57 L565.00 101.71 L564.50 101.82 L564.00 101.91 L563.50 101.98 L563.00 101.91 L562.50 101.71 L562.00 101.62 L561.50 101.82 L561.00 102.00 L560.50 102.16 L560.00 102.06 L559.50 102.00 L559.00 101.94 L558.50 101.73 L558.00 101.93 L557.50 102.15 L557.00 102.22 L556.50 102.35 L556.00 102.33 L555.50 102.25 L555.00 101.96 L554.50 101.95 L554.00 102.20 L553.50 102.42 L553.00 102.75 L552.50 102.55 L552.00 102.53 L551.50 102.39 L551.00 102.02 L550.50 102.26 L550.00 102.59 L549.50 102.71 L549.00 102.92 L548.50 103.07 L548.00 102.69 L547.50 102.50 L547.00 102.06 L546.50 102.59 L546.00 102.92 L545.50 103.27 L545.00 103.26 L544.50 103.31 L544.00 103.09 L543.50 102.61 L543.00 102.52 L542.50 103.24 L542.00 103.56 L541.50 103.84 L541.00 103.75 L540.50 103.78 L540.00 103.71 L539.50 103.82 L539.00 103.69 L538.50 104.44 L538.00 104.27 L537.50 104.42 L537.00 104.23 L536.50 103.99 L536.00 104.49 L535.50 104.84 L535.00 104.64 L534.50 104.69 L534.00 104.30 L533.50 104.60 L533.00 105.00 L532.50 105.39 L532.00 104.89 L531.50 104.78 L531.00 104.27 L530.50 104.83 L530.00 105.64 L529.50 105.66 L529.00 104.91 L528.50 104.69 L528.00 104.54 L527.50 104.78 L527.00 104.57 L526.50 104.34 L526.00 103.92 L525.50 102.18 L525.00 101.62 L524.50 101.43 L524.00 101.20 L523.50 101.20 L523.00 101.20 L522.50 101.20 L522.00 101.20 L521.50 101.20 L521.00 101.20 L520.50 101.20 L520.00 101.20 L519.50 101.20 L519.00 101.20 L518.50 101.20 L518.00 101.20 L517.50 101.20 L517.00 101.20 L516.50 101.20 L516.00 101.20 L515.50 101.20 L515.00 101.20 L514.50 101.20 L514.00 101.20 L513.50 101.20 L513.00 101.20 L512.50 101.20 L512.00 101.20 L511.50 101.20 L511.00 101.20 L510.50 101.20 L510.00 101.20 L509.50 101.20 L509.00 101.20 L508.50 101.20 L508.00 101.20 L507.50 101.20 L507.00 101.20 L506.50 101.20 L506.00 101.20 L505.50 101.20 L505.00 101.20 L504.50 101.20 L504.00 101.20 L503.50 101.20 L503.00 101.21 L502.50 101.21 L502.00 101.21 L501.50 101.22 L501.00 101.22 L500.50 101.21 L500.00 101.21 L499.50 101.22 L499.00 101.22 L498.50 101.23 L498.00 101.23 L497.50 101.23 L497.00 101.23 L496.50 101.22 L496.00 101.23 L495.50 101.24 L495.00 101.25 L494.50 101.26 L494.00 101.25 L493.50 101.25 L493.00 101.24 L492.50 101.24 L492.00 101.25 L491.50 101.27 L491.00 101.27 L490.50 101.28 L490.00 101.26 L489.50 101.24 L489.00 101.25 L488.50 101.27 L488.00 101.28 L487.50 101.28 L487.00 101.28 L486.50 101.27 L486.00 101.25 L485.50 101.26 L485.00 101.29 L484.50 101.30 L484.00 101.31 L483.50 101.30 L483.00 101.29 L482.50 101.25 L482.00 101.28 L481.50 101.31 L481.00 101.32 L480.50 101.33 L480.00 101.31 L479.50 101.28 L479.00 101.27 L478.50 101.30 L478.00 101.33 L477.50 101.35 L477.00 101.33 L476.50 101.33 L476.00 101.30 L475.50 101.28 L475.00 101.31 L474.50 101.38 L474.00 101.41 L473.50 101.45 L473.00 101.43 L472.50 101.41 L472.00 101.36 L471.50 101.43 L471.00 101.51 L470.50 101.62 L470.00 101.65 L469.50 101.64 L469.00 101.54 L468.50 101.47 L468.00 101.61 L467.50 101.89 L467.00 102.16 L466.50 102.37 L466.00 102.43 L465.50 102.30 L465.00 102.18 L464.50 102.09 L464.00 102.56 L463.50 102.96 L463.00 103.38 L462.50 103.48 L462.00 103.36 L461.50 103.84 L461.00 103.58 L460.50 103.45 L460.00 103.55 L459.50 104.33 L459.00 104.95 L458.50 105.18 L458.00 105.07 L457.50 105.14 L457.00 105.32 L456.50 105.71 L456.00 107.12 L455.50 106.49 L455.00 106.85 L454.50 105.43 L454.00 105.21 L453.50 105.56 L453.00 105.66 L452.50 106.99 L452.00 107.80 L451.50 106.81 L451.00 107.50 L450.50 107.34 L450.00 107.23 L449.50 108.82 L449.00 109.32 L448.50 111.01 L448.00 110.76 L447.50 108.34 L447.00 107.71 L446.50 108.52 L446.00 108.75 L445.50 109.04 L445.00 107.53 L444.50 106.95 L444.00 106.31 L443.50 106.73 L443.00 107.36 L442.50 107.95 L442.00 111.12 L441.50 111.75 L441.00 112.22 L440.50 111.56 L440.00 111.90 L439.50 112.77 L439.00 111.94 L438.50 110.72 L438.00 108.75 L437.50 110.33 L437.00 111.64 L436.50 114.83 L436.00 116.39 L435.50 116.13 L435.00 112.07 L434.50 111.15 L434.00 110.33 L433.50 114.46 L433.00 115.52 L432.50 117.12 L432.00 115.80 L431.50 117.46 L431.00 120.59 L430.50 118.14 L430.00 116.74 L429.50 115.33 L429.00 113.90 L428.50 115.80 L428.00 118.38 L427.50 121.32 L427.00 119.52 L426.50 114.53 L426.00 110.06 L425.50 105.26 L425.00 101.50 L424.50 101.60 L424.00 101.64 L423.50 101.71 L423.00 101.68 L422.50 101.63 L422.00 101.59 L421.50 101.45 L421.00 101.53 L420.50 101.66 L420.00 101.71 L419.50 101.72 L419.00 101.71 L418.50 101.66 L418.00 101.58 L417.50 101.46 L417.00 101.59 L416.50 101.74 L416.00 101.75 L415.50 101.83 L415.00 101.70 L414.50 101.62 L414.00 101.53 L413.50 101.56 L413.00 101.64 L412.50 101.74 L412.00 105.63 L411.50 113.13 L411.00 117.76 L410.50 118.10 L410.00 116.25 L409.50 116.05 L409.00 118.19 L408.50 119.67 L408.00 121.66 L407.50 120.72 L407.00 117.69 L406.50 118.10 L406.00 118.28 L405.50 120.02 L405.00 123.70 L404.50 121.75 L404.00 118.24 L403.50 118.16 L403.00 118.55 L402.50 121.03 L402.00 120.32 L401.50 120.71 L401.00 116.64 L400.50 118.03 L400.00 119.18 L399.50 120.18 L399.00 121.21 L398.50 118.21 L398.00 116.32 L397.50 116.47 L397.00 117.67 L396.50 119.60 L396.00 120.20 L395.50 117.80 L395.00 115.94 L394.50 116.22 L394.00 117.75 L393.50 119.22 L393.00 119.00 L392.50 115.69 L392.00 114.26 L391.50 116.94 L391.00 118.25 L390.50 119.39 L390.00 117.82 L389.50 116.42 L389.00 114.33 L388.50 115.28 L388.00 115.47 L387.50 117.44 L387.00 119.18 L386.50 116.92 L386.00 114.07 L385.50 113.53 L385.00 114.89 L384.50 116.16 L384.00 118.79 L383.50 117.99 L383.00 115.67 L382.50 115.06 L382.00 113.62 L381.50 114.02 L381.00 116.31 L380.50 118.26 L380.00 118.38 L379.50 116.92 L379.00 115.04 L378.50 112.82 L378.00 113.63 L377.50 114.93 L377.00 115.30 L376.50 114.76 L376.00 113.73 L375.50 112.20 L375.00 112.27 L374.50 114.65 L374.00 114.32 L373.50 115.83 L373.00 114.30 L372.50 111.39 L372.00 112.87 L371.50 112.32 L371.00 113.43 L370.50 113.17 L370.00 111.84 L369.50 111.63 L369.00 111.22 L368.50 112.65 L368.00 113.82 L367.50 112.16 L367.00 111.72 L366.50 110.89 L366.00 111.53 L365.50 112.48 L365.00 112.99 L364.50 111.59 L364.00 109.56 L363.50 109.81 L363.00 110.10 L362.50 111.57 L362.00 111.05 L361.50 109.67 L361.00 109.72 L360.50 109.12 L360.00 110.43 L359.50 110.51 L359.00 110.81 L358.50 109.09 L358.00 108.81 L357.50 109.06 L357.00 110.30 L356.50 109.41 L356.00 109.60 L355.50 108.92 L355.00 107.79 L354.50 108.23 L354.00 108.58 L353.50 109.11 L353.00 109.58 L352.50 109.25 L352.00 108.09 L351.50 107.80 L351.00 107.20 L350.50 108.43 L350.00 108.66 L349.50 108.47 L349.00 108.90 L348.50 108.13 L348.00 107.77 L347.50 107.22 L347.00 108.05 L346.50 108.40 L346.00 108.87 L345.50 108.20 L345.00 107.49 L344.50 106.78 L344.00 107.56 L343.50 107.55 L343.00 108.50 L342.50 108.11 L342.00 107.72 L341.50 107.19 L341.00 106.95 L340.50 107.07 L340.00 108.54 L339.50 108.54 L339.00 107.49 L338.50 106.97 L338.00 106.38 L337.50 107.27 L337.00 107.15 L336.50 107.43 L336.00 107.34 L335.50 106.69 L335.00 106.58 L334.50 107.32 L334.00 106.98 L333.50 107.26 L333.00 106.56 L332.50 106.00 L332.00 106.21 L331.50 106.88 L331.00 106.63 L330.50 106.01 L330.00 105.87 L329.50 105.55 L329.00 105.88 L328.50 106.53 L328.00 105.95 L327.50 105.75 L327.00 105.46 L326.50 105.65 L326.00 106.06 L325.50 106.13 L325.00 105.97 L324.50 105.15 L324.00 104.78 L323.50 104.89 L323.00 105.33 L322.50 105.87 L322.00 105.27 L321.50 105.04 L321.00 104.87 L320.50 104.47 L320.00 104.82 L319.50 104.78 L319.00 105.56 L318.50 105.49 L318.00 105.16 L317.50 104.70 L317.00 104.27 L316.50 104.36 L316.00 104.87 L315.50 104.93 L315.00 104.93 L314.50 104.72 L314.00 104.14 L313.50 104.23 L313.00 104.28 L312.50 104.67 L312.00 104.89 L311.50 104.72 L311.00 104.11 L310.50 103.84 L310.00 104.14 L309.50 104.31 L309.00 104.18 L308.50 104.30 L308.00 104.08 L307.50 103.81 L307.00 103.78 L306.50 103.87 L306.00 104.23 L305.50 104.64 L305.00 104.37 L304.50 103.64 L304.00 103.91 L303.50 103.73 L303.00 104.17 L302.50 104.37 L302.00 103.86 L301.50 103.51 L301.00 103.53 L300.50 103.72 L300.00 104.07 L299.50 103.80 L299.00 103.74 L298.50 103.54 L298.00 103.40 L297.50 103.96 L297.00 104.07 L296.50 103.73 L296.00 103.27 L295.50 103.25 L295.00 103.11 L294.50 103.57 L294.00 103.53 L293.50 103.51 L293.00 103.48 L292.50 102.97 L292.00 102.34 L291.50 102.73 L291.00 103.03 L290.50 103.31 L290.00 103.30 L289.50 103.35 L289.00 103.05 L288.50 102.48 L288.00 102.28 L287.50 102.81 L287.00 103.02 L286.50 103.11 L286.00 103.26 L285.50 102.97 L285.00 102.56 L284.50 102.20 L284.00 102.32 L283.50 102.71 L283.00 102.88 L282.50 103.10 L282.00 102.88 L281.50 102.71 L281.00 102.48 L280.50 101.95 L280.00 102.36 L279.50 102.73 L279.00 102.82 L278.50 102.90 L278.00 102.77 L277.50 102.56 L277.00 102.15 L276.50 102.05 L276.00 102.44 L275.50 102.73 L275.00 102.85 L274.50 102.61 L274.00 102.34 L273.50 102.15 L273.00 102.03 L272.50 102.35 L272.00 102.46 L271.50 102.60 L271.00 102.60 L270.50 102.37 L270.00 101.98 L269.50 101.88 L269.00 102.22 L268.50 102.46 L268.00 102.50 L267.50 102.38 L267.00 102.16 L266.50 101.88 L266.00 101.96 L265.50 102.22 L265.00 102.40 L264.50 102.32 L264.00 102.36 L263.50 102.12 L263.00 101.83 L262.50 101.94 L262.00 102.08 L261.50 102.33 L261.00 102.20 L260.50 102.08 L260.00 101.91 L259.50 101.65 L259.00 101.94 L258.50 102.10 L258.00 102.24 L257.50 102.11 L257.00 102.09 L256.50 101.89 L256.00 101.63 L255.50 101.83 L255.00 102.03 L254.50 102.10 L254.00 102.00 L253.50 101.97 L253.00 101.76 L252.50 101.58 L252.00 101.71 L251.50 101.84 L251.00 101.95 L250.50 101.92 L250.00 101.90 L249.50 101.78 L249.00 101.59 L248.50 101.58 L248.00 101.77 L247.50 101.85 L247.00 101.89 L246.50 101.89 L246.00 101.74 L245.50 101.67 L245.00 101.52 L244.50 101.63 L244.00 101.76 L243.50 101.87 L243.00 101.79 L242.50 101.83 L242.00 101.67 L241.50 101.58 L241.00 101.50 L240.50 101.67 L240.00 101.75 L239.50 101.79 L239.00 101.76 L238.50 101.73 L238.00 101.66 L237.50 101.49 L237.00 101.53 L236.50 101.63 L236.00 101.76 L235.50 101.79 L235.00 101.70 L234.50 101.68 L234.00 101.56 L233.50 101.46 L233.00 101.62 L232.50 101.69 L232.00 101.80 L231.50 101.76 L231.00 101.74 L230.50 101.60 L230.00 101.49 L229.50 101.60 L229.00 101.71 L228.50 101.79 L228.00 101.76 L227.50 101.75 L227.00 101.63 L226.50 101.48 L226.00 101.61 L225.50 101.68 L225.00 101.78 L224.50 101.79 L224.00 101.71 L223.50 101.63 L223.00 101.48 L222.50 101.58 L222.00 101.70 L221.50 101.82 L221.00 101.76 L220.50 101.73 L220.00 101.55 L219.50 101.51 L219.00 101.62 L218.50 101.77 L218.00 101.83 L217.50 101.78 L217.00 101.70 L216.50 101.58 L216.00 101.52 L215.50 101.67 L215.00 101.78 L214.50 101.81 L214.00 101.77 L213.50 101.71 L213.00 101.51 L212.50 101.53 L212.00 101.69 L211.50 101.84 L211.00 101.81 L210.50 101.86 L210.00 101.74 L209.50 101.60 L209.00 101.58 L208.50 101.74 L208.00 101.92 L207.50 101.94 L207.00 101.95 L206.50 101.79 L206.00 101.70 L205.50 101.63 L205.00 101.78 L204.50 101.91 L204.00 102.06 L203.50 102.02 L203.00 101.97 L202.50 101.88 L202.00 101.64 L201.50 101.78 L201.00 102.01 L200.50 102.16 L200.00 102.12 L199.50 102.22 L199.00 102.07 L198.50 101.83 L198.00 101.67 L197.50 101.91 L197.00 102.06 L196.50 102.29 L196.00 102.35 L195.50 102.26 L195.00 102.17 L194.50 101.90 L194.00 101.81 L193.50 102.11 L193.00 102.16 L192.50 102.37 L192.00 102.25 L191.50 102.18 L191.00 102.06 L190.50 101.84 L190.00 101.90 L189.50 102.21 L189.00 102.27 L188.50 102.42 L188.00 102.40 L187.50 102.09 L187.00 101.88 L186.50 101.93 L186.00 102.20 L185.50 102.43 L185.00 102.41 L184.50 102.46 L184.00 102.24 L183.50 102.02 L183.00 101.86 L182.50 102.24 L182.00 102.38 L181.50 102.60 L181.00 102.40 L180.50 102.29 L180.00 101.96 L179.50 101.96 L179.00 102.28 L178.50 102.58 L178.00 102.59 L177.50 102.43 L177.00 102.29 L176.50 101.88 L176.00 102.10 L175.50 102.39 L175.00 102.43 L174.50 102.49 L174.00 102.41 L173.50 102.12 L173.00 101.81 L172.50 102.12 L172.00 102.49 L171.50 102.62 L171.00 102.48 L170.50 102.32 L170.00 102.20 L169.50 101.88 L169.00 102.17 L168.50 102.56 L168.00 102.52 L167.50 102.59 L167.00 102.46 L166.50 102.18 L166.00 101.87 L165.50 102.27 L165.00 102.51 L164.50 102.63 L164.00 102.58 L163.50 102.46 L163.00 102.12 L162.50 101.90 L162.00 102.15 L161.50 102.42 L161.00 102.58 L160.50 102.43 L160.00 102.51 L159.50 102.18 L159.00 102.02 L158.50 101.91 L158.00 102.20 L157.50 102.41 L157.00 102.42 L156.50 102.48 L156.00 102.39 L155.50 102.17 L155.00 101.83 L154.50 101.96 L154.00 102.26 L153.50 102.58 L153.00 102.81 L152.50 103.02 L152.00 102.96 L151.50 102.78 L151.00 102.28 L150.50 102.64 L150.00 103.06 L149.50 103.61 L149.00 103.55 L148.50 103.35 L148.00 103.08 L147.50 102.62 L147.00 102.48 L146.50 103.15 L146.00 103.34 L145.50 103.49 L145.00 103.64 L144.50 103.35 L144.00 102.81 L143.50 102.43 L143.00 102.78 L142.50 103.24 L142.00 103.54 L141.50 103.67 L141.00 103.27 L140.50 102.81 L140.00 102.20 L139.50 102.84 L139.00 103.07 L138.50 103.48 L138.00 103.29 L137.50 103.30 L137.00 102.85 L136.50 102.25 L136.00 102.83 L135.50 102.95 L135.00 103.05 L134.50 102.86 L134.00 102.39 L133.50 101.96 L133.00 101.71 L132.50 101.87 L132.00 102.00 L131.50 102.09 L131.00 101.96 L130.50 101.92 L130.00 101.71 L129.50 101.70 L129.00 101.90 L128.50 101.96 L128.00 101.96 L127.50 101.98 L127.00 101.77 L126.50 101.60 L126.00 101.63 L125.50 101.81 L125.00 101.94 L124.50 101.89 L124.00 101.82 L123.50 101.71 L123.00 101.56 L122.50 101.64 L122.00 101.76 L121.50 101.87 L121.00 101.87 L120.50 101.85 L120.00 101.79 L119.50 101.62 L119.00 101.58 L118.50 101.74 L118.00 101.86 L117.50 101.94 L117.00 101.94 L116.50 101.82 L116.00 101.69 L115.50 101.53 L115.00 101.69 L114.50 101.83 L114.00 101.91 L113.50 101.86 L113.00 101.86 L112.50 101.72 L112.00 101.62 L111.50 101.59 L111.00 101.76 L110.50 101.83 L110.00 101.87 L109.50 101.96 L109.00 101.84 L108.50 101.79 L108.00 101.62 L107.50 101.69 L107.00 101.84 L106.50 101.94 L106.00 102.07 L105.50 102.02 L105.00 101.98 L104.50 101.86 L104.00 101.68 L103.50 101.92 L103.00 102.21 L102.50 102.37 L102.00 102.40 L101.50 102.31 L101.00 102.14 L100.50 101.93 L100.00 102.13 L99.50 102.51 L99.00 102.85 L98.50 102.87 L98.00 103.10 L97.50 102.78 L97.00 102.43 L96.50 102.57 L96.00 103.54 L95.50 103.83 L95.00 103.75 L94.50 103.33 L94.00 103.31 L93.50 103.92 L93.00 103.85 L92.50 104.24 L92.00 103.70 L91.50 103.75 L91.00 103.50 L90.50 103.78 L90.00 104.34 L89.50 104.52 L89.00 104.28 L88.50 104.21 L88.00 104.05 L87.50 104.29 L87.00 104.62 L86.50 104.62 L86.00 104.84 L85.50 104.30 L85.00 104.07 L84.50 104.53 L84.00 104.48 L83.50 104.66 L83.00 105.01 L82.50 105.20 L82.00 104.74 L81.50 104.57 L81.00 104.03 L80.50 104.62 L80.00 104.54 L79.50 104.66 L79.00 104.84 L78.50 104.41 L78.00 104.22 L77.50 104.22 L77.00 104.28 L76.50 104.74 L76.00 104.96 L75.50 104.54 L75.00 104.06 L74.50 104.08 L74.00 104.27 L73.50 104.70 L73.00 104.67 L72.50 104.88 L72.00 104.57 L71.50 104.18 L71.00 104.20 L70.50 104.59 L70.00 105.03 L69.50 104.45 L69.00 104.41 L68.50 104.31 L68.00 104.87 L67.50 105.29 L67.00 104.78 L66.50 104.37 L66.00 104.43 L65.50 104.81 L65.00 105.42 L64.50 105.83 L64.00 105.38 L63.50 104.93 L63.00 105.48 L62.50 106.54 L62.00 106.95 L61.50 108.00 L61.00 106.93 L60.50 106.13 L60.00 106.56 L59.50 107.27 L59.00 108.42 L58.50 108.28 L58.00 107.85 L57.50 106.47 L57.00 107.15 L56.50 108.18 L56.00 109.31 L55.50 108.84 L55.00 109.17 L54.50 107.81 L54.00 107.71 L53.50 108.43 L53.00 109.19 L52.50 109.80 L52.00 109.76 L51.50 108.63 L51.00 108.50 L50.50 107.19 L50.00 107.52 L49.50 109.36 L49.00 110.14 L48.50 110.02 L48.00 110.95 L47.50 109.65 L47.00 108.00 L46.50 109.74 L46.00 111.29 L45.50 112.69 L45.00 111.96 L44.50 109.75 L44.00 109.59 L43.50 108.72 L43.00 109.76 L42.50 109.96 L42.00 111.46 L41.50 110.95 L41.00 109.40 L40.50 108.30 L40.00 108.89 L39.50 109.72 L39.00 111.06 L38.50 109.83 L38.00 108.51 L37.50 108.72 L37.00 109.04 L36.50 110.57 L36.00 111.44 L35.50 110.62 L35.00 109.30 L34.50 108.92 L34.00 110.73 L33.50 112.24 L33.00 110.55 L32.50 109.71 L32.00 107.94 L31.50 108.48 L31.00 110.69 L30.50 110.53 L30.00 110.57 L29.50 108.51 L29.00 109.16 L28.50 110.26 L28.00 111.77 L27.50 113.11 L27.00 110.57 L26.50 108.93 L26.00 108.17 L25.50 108.16 L25.00 109.21 L24.50 108.72 L24.00 109.75 L23.50 109.59 L23.00 110.09 L22.50 112.09 L22.00 113.78 L21.50 117.04 L21.00 117.21 L20.50 115.11 L20.00 115.56 L19.50 114.73 L19.00 116.42 L18.50 116.58 L18.00 117.11 L17.50 116.54 L17.00 115.75 L16.50 114.75 L16.00 114.88 L15.50 116.02 L15.00 120.43 L14.50 121.23 L14.00 121.62 L13.50 119.30 L13.00 116.46 L12.50 118.99 L12.00 118.91 L11.50 123.10 L11.00 122.51 L10.50 120.97 L10.00 119.32 L9.50 118.78 L9.00 119.26 Z" fill="#ff6b35"/>
<rect x="109.35" y="55" width="1.3" height="92" fill="#80652a"/><rect x="211.35" y="55" width="1.3" height="92" fill="#80652a"/><rect x="311.85" y="55" width="1.3" height="92" fill="#80652a"/><rect x="413.85" y="55" width="1.3" height="92" fill="#80652a"/><rect x="514.25" y="55" width="1.3" height="92" fill="#80652a"/><rect x="616.35" y="55" width="1.3" height="92" fill="#80652a"/><rect x="716.35" y="55" width="1.3" height="92" fill="#80652a"/>
<!-- sequencer -->
<rect x="9.5" y="165.5" width="809.5" height="119.1" rx="4.5" fill="#242424" stroke="#2c2c2c"/>
<rect x="9.50" y="166.4" width="49.62" height="117.7" fill="#6b3427"/>
<rect x="16.30" y="214.43" width="35.6" height="6.38" fill="#ff4a1c"/>
<rect x="14.30" y="240.2" width="40.3" height="2.1" fill="#12b5d3"/>
<rect x="19.00" y="256.7" width="30.6" height="26.8" fill="#ffc107"/>
<text x="34.31" y="176" class="sn">1</text>
<rect x="60.12" y="166.4" width="49.62" height="117.7" fill="#3d3d3d"/>
<rect x="66.92" y="208.05" width="35.6" height="12.75" fill="#ff4a1c"/>
<rect x="64.92" y="240.2" width="40.3" height="2.1" fill="#12b5d3"/>
<rect x="69.62" y="256.7" width="30.6" height="26.8" fill="#ffc107"/>
<text x="84.94" y="176" class="sn">2</text>
<rect x="110.75" y="166.4" width="49.62" height="117.7" fill="#3d3d3d"/>
<rect x="117.55" y="201.68" width="35.6" height="19.12" fill="#ff4a1c"/>
<rect x="115.55" y="240.2" width="40.3" height="2.1" fill="#12b5d3"/>
<rect x="120.25" y="256.7" width="30.6" height="26.8" fill="#ffc107"/>
<text x="135.56" y="176" class="sn">3</text>
<rect x="161.38" y="166.4" width="49.62" height="117.7" fill="#3d3d3d"/>
<rect x="168.18" y="195.30" width="35.6" height="25.50" fill="#ff4a1c"/>
<rect x="166.18" y="240.2" width="40.3" height="2.1" fill="#12b5d3"/>
<rect x="170.88" y="256.7" width="30.6" height="26.8" fill="#ffc107"/>
<text x="186.19" y="176" class="sn">4</text>
<rect x="212.00" y="166.4" width="49.62" height="117.7" fill="#3d3d3d"/>
<rect x="218.80" y="188.93" width="35.6" height="31.88" fill="#ff4a1c"/>
<rect x="216.80" y="240.2" width="40.3" height="2.1" fill="#12b5d3"/>
<rect x="221.50" y="256.7" width="30.6" height="26.8" fill="#ffc107"/>
<text x="236.81" y="176" class="sn">5</text>
<rect x="262.62" y="166.4" width="49.62" height="117.7" fill="#3d3d3d"/>
<rect x="269.43" y="182.55" width="35.6" height="38.25" fill="#ff4a1c"/>
<rect x="267.43" y="240.2" width="40.3" height="2.1" fill="#12b5d3"/>
<rect x="272.12" y="256.7" width="30.6" height="26.8" fill="#ffc107"/>
<text x="287.44" y="176" class="sn">6</text>
<rect x="313.25" y="166.4" width="49.62" height="117.7" fill="#3d3d3d"/>
<rect x="320.05" y="176.18" width="35.6" height="44.62" fill="#ff4a1c"/>
<rect x="318.05" y="240.2" width="40.3" height="2.1" fill="#12b5d3"/>
<rect x="322.75" y="256.7" width="30.6" height="26.8" fill="#ffc107"/>
<text x="338.06" y="176" class="sn">7</text>
<rect x="363.88" y="166.4" width="49.62" height="117.7" fill="#3d3d3d"/>
<rect x="370.68" y="169.80" width="35.6" height="51.00" fill="#ff4a1c"/>
<rect x="368.68" y="240.2" width="40.3" height="2.1" fill="#12b5d3"/>
<rect x="373.38" y="256.7" width="30.6" height="26.8" fill="#ffc107"/>
<text x="388.69" y="176" class="sn" style="fill:#b8705a;stroke:none">8</text>
<rect x="413.50" y="166" width="1.2" height="118.2" fill="#353535"/>
<rect x="464.12" y="166" width="1.2" height="118.2" fill="#353535"/>
<rect x="514.75" y="166" width="1.2" height="118.2" fill="#353535"/>
<rect x="565.38" y="166" width="1.2" height="118.2" fill="#353535"/>
<rect x="616.00" y="166" width="1.2" height="118.2" fill="#353535"/>
<rect x="666.62" y="166" width="1.2" height="118.2" fill="#353535"/>
<rect x="717.25" y="166" width="1.2" height="118.2" fill="#353535"/>
<rect x="767.88" y="166" width="1.2" height="118.2" fill="#353535"/>
<!-- panels -->
<path d="M14 491.5 V314 a6 6 0 0 1 6 -6 H201 a6 6 0 0 1 6 6 V485.5 a6 6 0 0 1 -6 6 H20 a6 6 0 0 1 -6 -6Z" fill="#2b2b2b"/>
<path d="M14 332 V314 a6 6 0 0 1 6 -6 H201 a6 6 0 0 1 6 6 V332Z" fill="#6b3427"/>
<text x="25.8" y="323.8" transform="rotate(0.03 25.8 323.8)" class="pt" textLength="30.6" lengthAdjust="spacingAndGlyphs">BREAK</text>
<path d="M216 491.5 V314 a6 6 0 0 1 6 -6 H403 a6 6 0 0 1 6 6 V485.5 a6 6 0 0 1 -6 6 H222 a6 6 0 0 1 -6 -6Z" fill="#2b2b2b"/>
<path d="M216 332 V314 a6 6 0 0 1 6 -6 H403 a6 6 0 0 1 6 6 V332Z" fill="#6b5428"/>
<text x="227.8" y="323.8" transform="rotate(0.03 227.8 323.8)" class="pt" textLength="48.0" lengthAdjust="spacingAndGlyphs">ENVELOPE</text>
<path d="M418.7 491.5 V314 a6 6 0 0 1 6 -6 H605.7 a6 6 0 0 1 6 6 V485.5 a6 6 0 0 1 -6 6 H424.7 a6 6 0 0 1 -6 -6Z" fill="#2b2b2b"/>
<path d="M418.7 332 V314 a6 6 0 0 1 6 -6 H605.7 a6 6 0 0 1 6 6 V332Z" fill="#2f5a63"/>
<text x="430.5" y="323.8" transform="rotate(0.03 430.5 323.8)" class="pt" textLength="29.0" lengthAdjust="spacingAndGlyphs">FILTER</text>
<path d="M621 491.5 V314 a6 6 0 0 1 6 -6 H808 a6 6 0 0 1 6 6 V485.5 a6 6 0 0 1 -6 6 H627 a6 6 0 0 1 -6 -6Z" fill="#2b2b2b"/>
<path d="M621 332 V314 a6 6 0 0 1 6 -6 H808 a6 6 0 0 1 6 6 V332Z" fill="#4a2850"/>
<text x="632.8" y="323.8" transform="rotate(0.03 632.8 323.8)" class="pt" textLength="40.5" lengthAdjust="spacingAndGlyphs">EFFECTS</text>
<rect x="22.5" y="337.0" width="176" height="19.7" rx="3.5" fill="#202020" stroke="#8a8a8a" stroke-width="1"/><text x="26.9" y="350.65000000000003" class="st" font-size="10.5" style="letter-spacing:-0.1px">Detect</text><path d="M181.2 344.05 h6.4 l-3.2 5.8z" fill="#f0f0f0"/>
<rect x="427.2" y="337.0" width="176" height="19.7" rx="3.5" fill="#202020" stroke="#8a8a8a" stroke-width="1"/><text x="431.59999999999997" y="350.65000000000003" class="st" font-size="10.5" style="letter-spacing:-0.1px">Lowpass</text><path d="M585.9 344.05 h6.4 l-3.2 5.8z" fill="#f0f0f0"/>
<path d="M55.16 399.54 A18.10 18.10 0 1 1 76.44 399.54" fill="none" stroke="#474747" stroke-width="2.7" stroke-linecap="round"/>
<path d="M55.16 399.54 A18.10 18.10 0 0 1 48.07 388.56" fill="none" stroke="#ffc107" stroke-width="3" stroke-linecap="round"/>
<line x1="65.8" y1="384.9" x2="55.95" y2="386.93" stroke="#f2f2f2" stroke-width="2" stroke-linecap="round"/>
<circle cx="65.8" cy="384.9" r="3.8" fill="#dedede"/>
<path d="M144.36 399.54 A18.10 18.10 0 1 1 165.64 399.54" fill="none" stroke="#474747" stroke-width="2.7" stroke-linecap="round"/>
<path d="M144.36 399.54 A18.10 18.10 0 0 1 149.62 367.62" fill="none" stroke="#ff4a1c" stroke-width="3" stroke-linecap="round"/>
<line x1="155" y1="384.9" x2="152.01" y2="375.29" stroke="#f2f2f2" stroke-width="2" stroke-linecap="round"/>
<circle cx="155" cy="384.9" r="3.8" fill="#dedede"/>
<path d="M55.16 461.34 A18.10 18.10 0 1 1 76.44 461.34" fill="none" stroke="#474747" stroke-width="2.7" stroke-linecap="round"/>
<circle cx="55.16" cy="461.34" r="1.4" fill="#ffc107"/>
<line x1="65.8" y1="446.7" x2="59.89" y2="454.84" stroke="#f2f2f2" stroke-width="2" stroke-linecap="round"/>
<circle cx="65.8" cy="446.7" r="3.8" fill="#dedede"/>
<path d="M144.36 461.34 A18.10 18.10 0 1 1 165.64 461.34" fill="none" stroke="#474747" stroke-width="2.7" stroke-linecap="round"/>
<path d="M144.36 461.34 A18.10 18.10 0 0 1 149.62 429.42" fill="none" stroke="#ff4a1c" stroke-width="3" stroke-linecap="round"/>
<line x1="155" y1="446.7" x2="152.01" y2="437.09" stroke="#f2f2f2" stroke-width="2" stroke-linecap="round"/>
<circle cx="155" cy="446.7" r="3.8" fill="#dedede"/>
<path d="M253.80 385.32 A24.50 24.50 0 1 1 282.60 385.32" fill="none" stroke="#474747" stroke-width="2.7" stroke-linecap="round"/>
<path d="M253.80 385.32 A24.50 24.50 0 0 1 243.70 365.50" fill="none" stroke="#ff4a1c" stroke-width="3" stroke-linecap="round"/>
<line x1="268.2" y1="365.5" x2="254.30" y2="365.50" stroke="#f2f2f2" stroke-width="2" stroke-linecap="round"/>
<circle cx="268.2" cy="365.5" r="3.8" fill="#dedede"/>
<path d="M342.80 385.32 A24.50 24.50 0 1 1 371.60 385.32" fill="none" stroke="#474747" stroke-width="2.7" stroke-linecap="round"/>
<path d="M342.80 385.32 A24.50 24.50 0 0 1 357.82 341.01" fill="none" stroke="#ff4a1c" stroke-width="3" stroke-linecap="round"/>
<line x1="357.2" y1="365.5" x2="357.55" y2="351.60" stroke="#f2f2f2" stroke-width="2" stroke-linecap="round"/>
<circle cx="357.2" cy="365.5" r="3.8" fill="#dedede"/>
<path d="M253.80 459.82 A24.50 24.50 0 1 1 282.60 459.82" fill="none" stroke="#474747" stroke-width="2.7" stroke-linecap="round"/>
<path d="M253.80 459.82 A24.50 24.50 0 1 1 292.65 438.46" fill="none" stroke="#ff4a1c" stroke-width="3" stroke-linecap="round"/>
<line x1="268.2" y1="440" x2="282.07" y2="439.13" stroke="#f2f2f2" stroke-width="2" stroke-linecap="round"/>
<circle cx="268.2" cy="440" r="3.8" fill="#dedede"/>
<path d="M342.80 459.82 A24.50 24.50 0 1 1 371.60 459.82" fill="none" stroke="#474747" stroke-width="2.7" stroke-linecap="round"/>
<path d="M342.80 459.82 A24.50 24.50 0 0 1 357.82 415.51" fill="none" stroke="#ff4a1c" stroke-width="3" stroke-linecap="round"/>
<line x1="357.2" y1="440" x2="357.55" y2="426.10" stroke="#f2f2f2" stroke-width="2" stroke-linecap="round"/>
<circle cx="357.2" cy="440" r="3.8" fill="#dedede"/>
<path d="M459.86 399.34 A18.10 18.10 0 1 1 481.14 399.34" fill="none" stroke="#474747" stroke-width="2.7" stroke-linecap="round"/>
<path d="M459.86 399.34 A18.10 18.10 0 1 1 488.28 388.09" fill="none" stroke="#08bcdc" stroke-width="3" stroke-linecap="round"/>
<line x1="470.5" y1="384.7" x2="480.38" y2="386.59" stroke="#f2f2f2" stroke-width="2" stroke-linecap="round"/>
<circle cx="470.5" cy="384.7" r="3.8" fill="#dedede"/>
<path d="M548.86 399.34 A18.10 18.10 0 1 1 570.14 399.34" fill="none" stroke="#474747" stroke-width="2.7" stroke-linecap="round"/>
<circle cx="548.86" cy="399.34" r="1.4" fill="#08bcdc"/>
<line x1="559.5" y1="384.7" x2="553.59" y2="392.84" stroke="#f2f2f2" stroke-width="2" stroke-linecap="round"/>
<circle cx="559.5" cy="384.7" r="3.8" fill="#dedede"/>
<path d="M459.86 461.14 A18.10 18.10 0 1 1 481.14 461.14" fill="none" stroke="#474747" stroke-width="2.7" stroke-linecap="round"/>
<path d="M459.86 461.14 A18.10 18.10 0 0 1 470.50 428.40" fill="none" stroke="#08bcdc" stroke-width="3" stroke-linecap="round"/>
<line x1="470.5" y1="446.5" x2="470.50" y2="436.44" stroke="#f2f2f2" stroke-width="2" stroke-linecap="round"/>
<circle cx="470.5" cy="446.5" r="3.8" fill="#dedede"/>
<path d="M548.86 461.14 A18.10 18.10 0 1 1 570.14 461.14" fill="none" stroke="#474747" stroke-width="2.7" stroke-linecap="round"/>
<path d="M548.86 461.14 A18.10 18.10 0 1 1 570.14 461.14" fill="none" stroke="#08bcdc" stroke-width="3" stroke-linecap="round"/>
<line x1="559.5" y1="446.5" x2="565.41" y2="454.64" stroke="#f2f2f2" stroke-width="2" stroke-linecap="round"/>
<circle cx="559.5" cy="446.5" r="3.8" fill="#dedede"/>
<path d="M665.81 362.93 A11.90 11.90 0 1 1 679.79 362.93" fill="none" stroke="#474747" stroke-width="2.7" stroke-linecap="round"/>
<circle cx="665.81" cy="362.93" r="1.4" fill="#a126c4"/>
<line x1="672.8" y1="353.3" x2="669.07" y2="358.43" stroke="#f2f2f2" stroke-width="2" stroke-linecap="round"/>
<circle cx="672.8" cy="353.3" r="3.8" fill="#dedede"/>
<path d="M755.11 362.93 A11.90 11.90 0 1 1 769.09 362.93" fill="none" stroke="#474747" stroke-width="2.7" stroke-linecap="round"/>
<path d="M755.11 362.93 A11.90 11.90 0 0 1 765.06 341.77" fill="none" stroke="#a126c4" stroke-width="3" stroke-linecap="round"/>
<line x1="762.1" y1="353.3" x2="763.68" y2="347.16" stroke="#f2f2f2" stroke-width="2" stroke-linecap="round"/>
<circle cx="762.1" cy="353.3" r="3.8" fill="#dedede"/>
<path d="M665.81 412.83 A11.90 11.90 0 1 1 679.79 412.83" fill="none" stroke="#474747" stroke-width="2.7" stroke-linecap="round"/>
<path d="M665.81 412.83 A11.90 11.90 0 0 1 662.75 396.82" fill="none" stroke="#a126c4" stroke-width="3" stroke-linecap="round"/>
<line x1="672.8" y1="403.2" x2="667.45" y2="399.80" stroke="#f2f2f2" stroke-width="2" stroke-linecap="round"/>
<circle cx="672.8" cy="403.2" r="3.8" fill="#dedede"/>
<path d="M755.11 412.83 A11.90 11.90 0 1 1 769.09 412.83" fill="none" stroke="#474747" stroke-width="2.7" stroke-linecap="round"/>
<circle cx="755.11" cy="412.83" r="1.4" fill="#a126c4"/>
<line x1="762.1" y1="403.2" x2="758.37" y2="408.33" stroke="#f2f2f2" stroke-width="2" stroke-linecap="round"/>
<circle cx="762.1" cy="403.2" r="3.8" fill="#dedede"/>
<path d="M665.81 462.33 A11.90 11.90 0 1 1 679.79 462.33" fill="none" stroke="#474747" stroke-width="2.7" stroke-linecap="round"/>
<path d="M665.81 462.33 A11.90 11.90 0 0 1 672.80 440.80" fill="none" stroke="#a126c4" stroke-width="3" stroke-linecap="round"/>
<line x1="672.8" y1="452.7" x2="672.80" y2="446.36" stroke="#f2f2f2" stroke-width="2" stroke-linecap="round"/>
<circle cx="672.8" cy="452.7" r="3.8" fill="#dedede"/>
<path d="M755.11 462.33 A11.90 11.90 0 1 1 769.09 462.33" fill="none" stroke="#474747" stroke-width="2.7" stroke-linecap="round"/>
<path d="M755.11 462.33 A11.90 11.90 0 1 1 773.98 451.95" fill="none" stroke="#44b44c" stroke-width="3" stroke-linecap="round"/>
<line x1="762.1" y1="452.7" x2="768.43" y2="452.30" stroke="#f2f2f2" stroke-width="2" stroke-linecap="round"/>
<circle cx="762.1" cy="452.7" r="3.8" fill="#dedede"/>
<text x="65.8" y="419.3" class="kl">Slices</text>
<text x="155" y="419.3" class="kl">Stretch</text>
<text x="65.8" y="480.8" class="kl">Bars</text>
<text x="155" y="480.8" class="kl">Voices</text>
<text x="268.2" y="406.6" class="kl">Attack</text>
<text x="357.2" y="406.6" class="kl">Decay</text>
<text x="268.2" y="480.8" class="kl">Sustain</text>
<text x="357.2" y="480.8" class="kl">Release</text>
<text x="470.5" y="419.3" class="kl">Cutoff</text>
<text x="559.5" y="419.3" class="kl">Reso</text>
<text x="470.5" y="480.8" class="kl">Env Amt</text>
<text x="559.5" y="480.8" class="kl">Mix</text>
<text x="672.8" y="381.6" class="kl">Delay</text>
<text x="762.1" y="381.6" class="kl">D.Time</text>
<text x="672.8" y="431.2" class="kl">D.Feed</text>
<text x="762.1" y="431.2" class="kl">Reverb</text>
<text x="672.8" y="480.8" class="kl">R.Decay</text>
<text x="762.1" y="480.8" class="kl">Output</text>
</svg>
</body></html>
